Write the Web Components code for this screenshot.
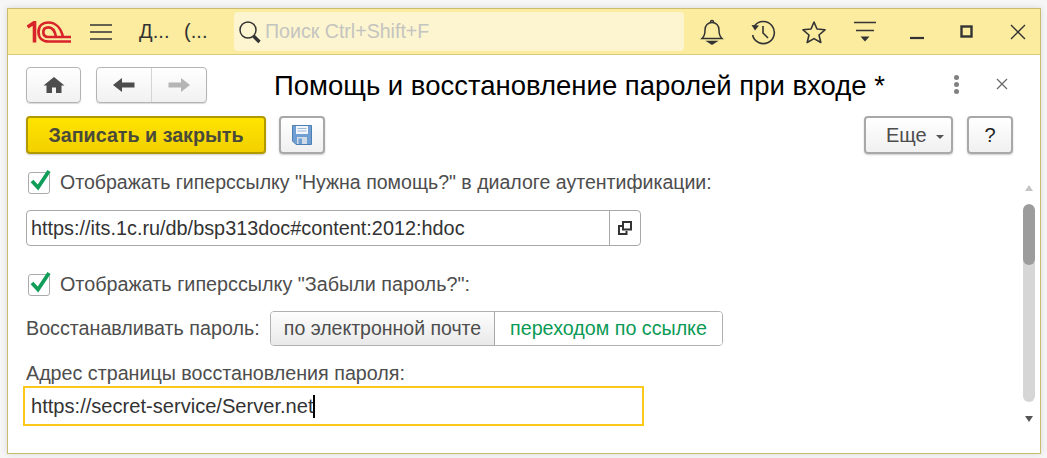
<!DOCTYPE html>
<html lang="ru">
<head>
<meta charset="utf-8">
<title>Помощь и восстановление паролей при входе</title>
<style>
html, body { margin: 0; height: 100%; background: #f6f6f6; overflow: hidden; }
body { font: 19.7px "Liberation Sans", Arial, sans-serif; color: #4d4d4d; }
</style>
</head>
<body>
<app-window>
  <title-bar slot="top"></title-bar>
  <form-head></form-head>
  <form-commands></form-commands>
  <form-body>
    <check-row style="font-size:19.55px">Отображать гиперссылку "Нужна помощь?" в диалоге аутентификации:</check-row>
    <text-field style="margin-top:15px" value="https://its.1c.ru/db/bsp313doc#content:2012:hdoc" open-button></text-field>
    <check-row style="margin-top:26px;font-size:19.77px">Отображать гиперссылку "Забыли пароль?":</check-row>
    <mode-switch style="margin-top:14px" label="Восстанавливать пароль:" first="по электронной почте" second="переходом по ссылке"></mode-switch>
    <field-label style="margin-top:16px">Адрес страницы восстановления пароля:</field-label>
    <text-field style="margin-top:2px" value="https://secret-service/Server.net" focused></text-field>
  </form-body>
</app-window>

<script>
class AppWindow extends HTMLElement {
  constructor() {
    super();
    this.attachShadow({ mode: "open" });
    this.shadowRoot.innerHTML = `
    <style>
    :host{
      display: flex;
      flex-direction: column;
      box-sizing: border-box;
      width: 1034px;
      height: 446px;
      margin: 8px 0 0 7px;
      background: #fff;
      border: 1px solid #c9bd6c;
      box-shadow: 0 0 6px rgba(0,0,0,0.12);
      overflow: hidden;
    }
    </style>
    <slot name="top"></slot>
    <slot></slot>
    `;
  }
}
customElements.define("app-window", AppWindow);

class TitleBar extends HTMLElement {
  constructor() {
    super();
    this.attachShadow({ mode: "open" });
    this.shadowRoot.innerHTML = `
    <style>
    :host{
      display: flex;
      align-items: center;
      box-sizing: border-box;
      height: 46px;
      flex: none;
      background: #fbeca0;
      border-bottom: 1px solid #d9cb7c;
      color: #333;
    }
    svg{ display: block; flex: none; }
    .logo{ margin-left: 19px; }
    .menu{ margin-left: 19px; }
    .name{ flex: none; margin-left: 26px; width: 95px; font-size: 20px; word-spacing: 1.5px; letter-spacing: 0.1px; white-space: pre; color: #333; }
    .search{
      display: flex;
      flex: none;
      align-items: center;
      gap: 3px;
      box-sizing: border-box;
      width: 450px;
      height: 39px;
      padding-left: 4px;
      border-radius: 4px;
      background: #fdf5cf;
      color: #c4c4c0;
      font-size: 19.6px;
    }
    .tools{ display: flex; flex: none; align-items: center; margin-left: 2px; }
    .tools span{ display: flex; justify-content: center; width: 51px; }
    .tools .min{ padding-left: 3px; width: 48px; }
    </style>
    <svg class="logo" width="44" height="22" viewBox="0 0 44 22" fill="none" stroke="#d8232a" stroke-width="2.7">
      <path d="M0.500 6 L7.500 1.500 V21.500" stroke-width="3.600"/>
      <path d="M36 16 C34 7 28.500 1.500 21.500 1.500 C15 1.500 11.500 5.500 11.500 11 C11.500 16.500 15 20.500 21.500 20.500 H44"/>
      <path d="M29 16 C28 10 25.500 6.300 21.500 6.300 C18 6.300 16.300 8.300 16.300 11 C16.300 14 18 16 21.500 16 H44"/>
    </svg>
    <svg class="menu" width="23" height="18" viewBox="0 0 23 18" stroke="#333" stroke-width="1.4">
      <path d="M0 2H22M0 9H22M0 16H22"/>
    </svg>
    <div class="name">Д...  (...</div>
    <div class="search">
      <svg width="24" height="26" viewBox="0 0 24 26" fill="none" stroke="#333">
        <circle cx="10" cy="11" r="8" stroke-width="1.5"/>
        <path d="M15.500 17 L21.500 23" stroke-width="3.400"/>
      </svg>
      <span>Поиск Ctrl+Shift+F</span>
    </div>
    <div class="tools">
      <span><svg width="24" height="26" viewBox="0 0 24 26" fill="none" stroke="#333" stroke-width="1.500">
        <path d="M2 19.500 C5 17 5 14 5 11 C5 6.500 8 3.500 12 3.500 C16 3.500 19 6.500 19 11 C19 14 19 17 22 19.500 Z"/>
        <path d="M10.500 3 C10.500 1 13.500 1 13.500 3"/>
        <path d="M8 22.500 H16 L12 25 Z" fill="#333"/>
      </svg></span>
      <span><svg width="26" height="26" viewBox="0 0 26 26" fill="none" stroke="#333" stroke-width="1.600">
        <path d="M4.500 7 A11 11 0 1 1 2.600 16"/>
        <path d="M1.500 6 L5 11.500 L9 6.500 Z" fill="#333" stroke="none"/>
        <path d="M13 7 V14 L18 19"/>
      </svg></span>
      <span><svg width="24" height="24" viewBox="0 0 24 24" fill="none" stroke="#333" stroke-width="1.600">
        <path d="M12 2 L15 9 L23 9.800 L17 15 L18.800 22.500 L12 18.600 L5.200 22.500 L7 15 L1 9.800 L9 9 Z" stroke-linejoin="round"/>
      </svg></span>
      <span><svg width="24" height="22" viewBox="0 0 24 22" fill="none" stroke="#333" stroke-width="1.300">
        <path d="M1 1.500H23M3 9.500H21"/>
        <path d="M7.500 15.500 H16.500 L12 20.500 Z" fill="#333" stroke="none"/>
      </svg></span>
      <span class="min"><svg width="14" height="16" viewBox="0 0 14 16" stroke="#333" stroke-width="2.200">
        <path d="M0 14H14"/>
      </svg></span>
      <span><svg width="13" height="13" viewBox="0 0 13 13" fill="none" stroke="#333" stroke-width="2.400">
        <rect x="1.500" y="1.500" width="10" height="10"/>
      </svg></span>
      <span><svg width="18" height="18" viewBox="0 0 18 18" stroke="#333" stroke-width="1.400">
        <path d="M2 2L16 16M16 2L2 16"/>
      </svg></span>
    </div>
    `;
  }
}
customElements.define("title-bar", TitleBar);

class FormHead extends HTMLElement {
  constructor() {
    super();
    this.attachShadow({ mode: "open" });
    this.shadowRoot.innerHTML = `
    <style>
    :host{
      display: flex;
      align-items: center;
      box-sizing: border-box;
      height: 48px;
      padding: 12px 0 0 18px;
      flex: none;
    }
    .btn{
      display: flex;
      flex: none;
      align-items: center;
      justify-content: center;
      box-sizing: border-box;
      height: 36px;
      border: 1px solid #b4b4b4;
      border-radius: 4px;
      background: linear-gradient(#fff, #f1f1f1);
      box-shadow: 0 1px 1px rgba(0,0,0,0.15);
    }
    .home{ width: 55px; }
    .nav{ width: 111px; margin-left: 15px; }
    .nav div{ display: flex; align-items: center; justify-content: center; flex: 1; height: 100%; }
    .nav div + div{ border-left: 1px solid #d4d4d4; }
    h1{
      flex: none;
      margin: 2px 0 0 67px;
      width: 680px;
      font-weight: 400;
      font-size: 27.5px;
      color: #000;
      white-space: nowrap;
    }
    .dots{ display: flex; flex-direction: column; gap: 2px; margin-top: -2px; }
    .dots i{ display: block; width: 5px; height: 5px; border-radius: 50%; background: #808080; }
    .close{ display: block; flex: none; margin-left: 37px; margin-top: -2px; }
    svg{ display: block; }
    </style>
    <div class="btn home">
      <svg width="22" height="18" viewBox="0 0 22 18" fill="#4d4d4d">
        <path d="M11 1 L21.500 9.500 H18.500 V17 H13 V11.500 H9 V17 H3.500 V9.500 H0.500 Z"/>
      </svg>
    </div>
    <div class="btn nav">
      <div><svg width="22" height="14" viewBox="0 0 22 14" fill="#4d4d4d"><path d="M0 7 L9 0 V4.500 H21.500 V9.500 H9 V14 Z"/></svg></div>
      <div><svg width="22" height="14" viewBox="0 0 22 14" fill="#b5b5b5"><path d="M22 7 L13 0 V4.500 H0.500 V9.500 H13 V14 Z"/></svg></div>
    </div>
    <h1>Помощь и восстановление паролей при входе *</h1>
    <div class="dots"><i></i><i></i><i></i></div>
    <svg class="close" width="12" height="12" viewBox="0 0 12 12" stroke="#666" stroke-width="1.200"><path d="M1 1L11 11M11 1L1 11"/></svg>
    `;
  }
}
customElements.define("form-head", FormHead);

class FormCommands extends HTMLElement {
  constructor() {
    super();
    this.attachShadow({ mode: "open" });
    this.shadowRoot.innerHTML = `
    <style>
    :host{
      display: flex;
      align-items: flex-start;
      box-sizing: border-box;
      height: 52px;
      padding: 13px 27px 0 18px;
      flex: none;
    }
    .btn{
      display: flex;
      align-items: center;
      justify-content: center;
      box-sizing: border-box;
      height: 38px;
      border: 2px solid #a8a8a8;
      border-radius: 4px;
      background: linear-gradient(#fff, #f0f0f0);
      box-shadow: 0 1px 2px rgba(0,0,0,0.2);
      color: #4d4d4d;
    }
    .save-close{
      width: 240px;
      border-color: #b09a00;
      background: linear-gradient(#ffe400, #f2d000);
      font-weight: 700;
      font-size: 19.7px;
      color: #4a4a3a;
    }
    .save{ width: 46px; margin-left: 13px; }
    .more{ width: 89px; margin-left: auto; justify-content: flex-start; gap: 9px; padding-left: 20px; font-size: 20px; }
    .more i{ display: block; margin-top: 3px; border: 4px solid transparent; border-top: 4px solid #555; border-bottom: 0; }
    .help{ width: 46px; margin-left: 14px; color: #222; font-size: 20px; }
    svg{ display: block; }
    </style>
    <div class="btn save-close">Записать и закрыть</div>
    <div class="btn save">
      <svg width="20" height="20" viewBox="0 0 20 20">
        <path d="M0.500 0.500 H19.500 V19.500 H4 L0.500 16 Z" fill="#6f9fd2" stroke="#4d7fb3"/>
        <rect x="4" y="1" width="12" height="8" fill="#f2f6fa"/>
        <path d="M5.500 3.500H14.500M5.500 6H14.500" stroke="#9db9d6"/>
        <rect x="5" y="12" width="10" height="7" fill="#cfdbe6"/>
        <rect x="6.500" y="13.500" width="3.500" height="5.500" fill="#6f9fd2"/>
      </svg>
    </div>
    <div class="btn more">Еще<i></i></div>
    <div class="btn help">?</div>
    `;
  }
}
customElements.define("form-commands", FormCommands);

class FormBody extends HTMLElement {
  constructor() {
    super();
    this.attachShadow({ mode: "open" });
    this.shadowRoot.innerHTML = `
    <style>
    :host{
      display: flex;
      flex: 1;
      min-height: 0;
    }
    .content{
      display: flex;
      flex-direction: column;
      flex: 1;
      padding: 15px 0 0 18px;
      min-width: 0;
    }
    .scroll{
      display: flex;
      flex-direction: column;
      align-items: center;
      box-sizing: border-box;
      width: 12px;
      margin-right: 5px;
      padding-top: 30px;
    }
    .up, .down{ width: 0; height: 0; border: 4px solid transparent; }
    .up{ border-bottom: 6px solid #c4c4c4; border-top: 0; }
    .down{ border-top: 6px solid #555; border-bottom: 0; margin-top: 14px; }
    .track{
      width: 12px;
      height: 198px;
      margin-top: 13px;
      border-radius: 6px;
      background: #d6d6d6;
      overflow: hidden;
    }
    .thumb{ height: 61px; border-radius: 6px; background: #9c9c9c; }
    </style>
    <div class="content"><slot></slot></div>
    <div class="scroll">
      <div class="up"></div>
      <div class="track"><div class="thumb"></div></div>
      <div class="down"></div>
    </div>
    `;
  }
}
customElements.define("form-body", FormBody);

class CheckRow extends HTMLElement {
  constructor() {
    super();
    this.attachShadow({ mode: "open" });
    this.shadowRoot.innerHTML = `
    <style>
    :host{
      display: flex;
      align-items: center;
      height: 25px;
      margin-left: 2px;
      gap: 10px;
      white-space: nowrap;
    }
    .box{
      position: relative;
      box-sizing: border-box;
      width: 22px;
      height: 22px;
      margin-top: 1px;
      border: 1px solid #ababab;
      border-radius: 3px;
      background: #fff;
    }
    svg{ position: absolute; left: 1px; top: -4px; }
    </style>
    <div class="box">
      <svg width="22" height="22" viewBox="0 0 22 22" fill="none" stroke="#0f9d58" stroke-width="3.800">
        <path d="M2 12 L8 18.500 L19 2"/>
      </svg>
    </div>
    <div><slot></slot></div>
    `;
  }
}
customElements.define("check-row", CheckRow);

class TextField extends HTMLElement {
  constructor() {
    super();
    this.attachShadow({ mode: "open" });
    const focused = this.hasAttribute("focused");
    const value = this.getAttribute("value") || "";
    this.shadowRoot.innerHTML = `
    <style>
    :host{
      display: flex;
      align-items: stretch;
      box-sizing: border-box;
      width: 615px;
      height: 36px;
      border: 1px solid #a8a8a8;
      border-radius: 4px;
      color: #333;
      background: #fff;
      font-size: 19.85px;
    }
    :host([focused]){
      width: 621px;
      height: 40px;
      margin-left: -3px;
      border: 2px solid #fcc81a;
      border-radius: 0;
      font-size: 20.1px;
    }
    .value{ display: flex; align-items: center; flex: 1; padding-left: 4px; white-space: nowrap; }
    :host([focused]) .value{ padding-left: 6px; }
    .caret{ display: inline-block; width: 2px; height: 23px; margin-left: -1px; background: #000; }
    .open{ display: flex; align-items: center; justify-content: center; width: 30px; border-left: 1px solid #a8a8a8; }
    svg{ display: block; }
    </style>
    <div class="value">${value}${focused ? '<span class="caret"></span>' : ""}</div>
    ${this.hasAttribute("open-button") ? `<div class="open">
      <svg width="16" height="16" viewBox="0 0 16 16" fill="none" stroke="#333" stroke-width="2">
        <rect x="6" y="2" width="8" height="7.500"/>
        <path d="M5 6 H2 V14 H9.500 V11"/>
      </svg></div>` : ""}
    `;
  }
}
customElements.define("text-field", TextField);

class ModeSwitch extends HTMLElement {
  constructor() {
    super();
    this.attachShadow({ mode: "open" });
    this.shadowRoot.innerHTML = `
    <style>
    :host{
      display: flex;
      align-items: center;
      white-space: nowrap;
    }
    .label{ width: 244px; }
    .group{
      display: flex;
      box-sizing: border-box;
      height: 35px;
      border: 1px solid #b0b0b0;
      border-radius: 4px;
      overflow: hidden;
    }
    .group div{ display: flex; align-items: center; justify-content: center; }
    .first{ width: 223px; background: linear-gradient(#fdfdfd, #e9e9e9); border-right: 1px solid #a8a8a8; font-size: 19.5px; }
    .second{ width: 227px; color: #0b9a55; background: #fff; }
    </style>
    <div class="label">${this.getAttribute("label")}</div>
    <div class="group">
      <div class="first">${this.getAttribute("first")}</div>
      <div class="second">${this.getAttribute("second")}</div>
    </div>
    `;
  }
}
customElements.define("mode-switch", ModeSwitch);

class FieldLabel extends HTMLElement {
  constructor() {
    super();
    this.attachShadow({ mode: "open" });
    this.shadowRoot.innerHTML = `
    <style>
    :host{ display: block; line-height: 22px; white-space: nowrap; }
    </style>
    <slot></slot>
    `;
  }
}
customElements.define("field-label", FieldLabel);
</script>
</body>
</html>
